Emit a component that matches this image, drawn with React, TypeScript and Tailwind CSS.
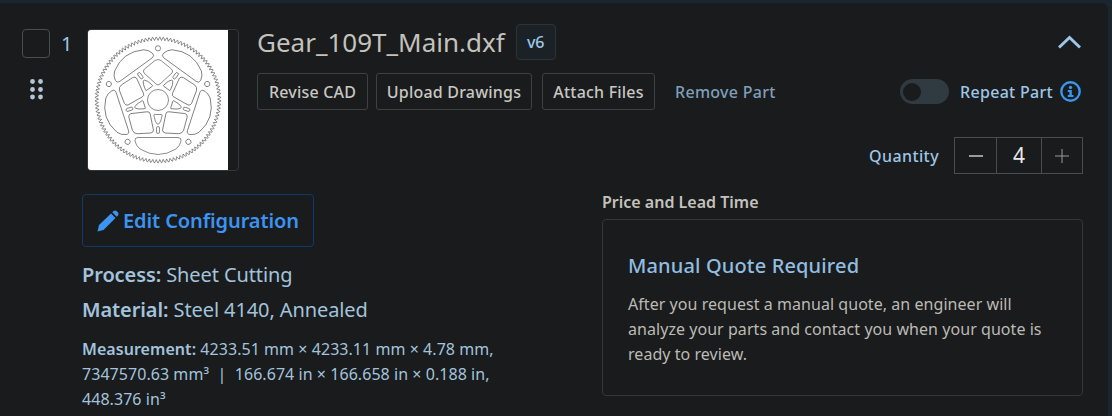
import React from "react";

function gearPath() {
  const n = 109;
  const pts: string[] = [];
  for (let i = 0; i < n; i++) {
    const t = (i / n) * Math.PI * 2;
    const d = (Math.PI * 2) / n;
    const p = (a: number, r: number) => `${(r * Math.sin(a)).toFixed(2)},${(-r * Math.cos(a)).toFixed(2)}`;
    pts.push((i === 0 ? "M" : "L") + p(t, 59.6));
    pts.push("L" + p(t + d * 0.42, 62.8));
    pts.push("L" + p(t + d * 0.58, 62.8));
  }
  return pts.join(" ") + " Z";
}

function Gear() {
  const rots = [0, 72, 144, 216, 288];
  return (
    <svg viewBox="-70 -70 140 140" width={140} height={140} className="block bg-white" fill="none" stroke="#3f3f3f" strokeWidth={0.6}>
      <path d={gearPath()} />
      <circle r={10.5} />
      {rots.map((r) => (
        <g key={r} transform={`rotate(${r})`}>
          <circle cx={0} cy={-51.7} r={2.6} />
          <path d="M-3,-39.5 Q0,-41.5 3,-39.5 L13.5,-31 Q15.5,-29 14,-27 L2,-16 Q0,-14 -2,-16 L-14,-27 Q-15.5,-29 -13.5,-31 Z" />
          <path d="M-20,37.5 H20 Q23.5,37.5 23,41 Q22,46 18,49 Q0,60 -18,49 Q-22,46 -23,41 Q-23.5,37.5 -20,37.5 Z" />
          <path d="M-3.5,14.5 H3.5 Q4.5,14.5 4,16 Q3,22 0.8,24 Q0,24.5 -0.8,24 Q-3,22 -4,16 Q-4.5,14.5 -3.5,14.5 Z" />
          <rect x={-1.5} y={26.5} width={3} height={7} rx={1.5} />
        </g>
      ))}
    </svg>
  );
}

function Grip() {
  const spots = [
    [2.5, 2.5], [10.5, 2.5],
    [2.5, 10.5], [10.5, 10.5],
    [2.5, 18], [10.5, 18],
  ];
  return (
    <svg width={13} height={21} viewBox="0 0 13 21" fill="#b4c6d4">
      {spots.map(([x, y], i) => (
        <circle key={i} cx={x} cy={y} r={2.4} />
      ))}
    </svg>
  );
}

function OutlineButton({ children, className }: { children: React.ReactNode; className: string }) {
  return (
    <button className={`h-[37px] rounded-[3px] border border-[#3e4144] text-[16px] font-medium tracking-[0.2px] text-[#c9c7c1] leading-none ${className}`}>
      {children}
    </button>
  );
}

export default function App() {
  return (
    <div className="w-[1112px] h-[416px] overflow-hidden bg-[#1a252d] font-['Noto_Sans',sans-serif] pt-[3px] pr-[4px]">
      <div className="h-full bg-[#191b1d] rounded-tr-[6px] flex flex-col">
        <div className="flex pl-[22px] pr-[25px]">
          <div className="w-[65px] shrink-0 pt-[26px]">
            <div className="flex items-start">
              <div className="w-[28px] h-[29px] rounded-[4px] border border-[#4a4d50]" />
              <span className="ml-[11px] text-[20px] leading-[29px] text-[#9ec6e6]">1</span>
            </div>
            <div className="mt-[21px] ml-[8px]">
              <Grip />
            </div>
          </div>
          <div className="w-[152px] h-[142px] shrink-0 mt-[26px] rounded-[4px] border border-[#33373a] overflow-hidden">
            <Gear />
          </div>
          <div className="ml-[18px] flex-1 pt-[21px]">
            <div className="flex items-center h-[36px]">
              <span className="text-[26px] leading-none text-[#c4c2bc]">Gear_109T_Main.dxf</span>
              <span className="ml-[11px] w-[40px] h-[36px] flex items-center justify-center rounded-[4px] border border-[#2e3337] bg-[#1a2228] text-[16px] font-medium text-[#9ec6e6]">
                v6
              </span>
              <svg className="ml-auto mr-[2px]" width={23} height={14} viewBox="0 0 23 14" fill="none" stroke="#9ec6e6" strokeWidth={3}>
                <path d="M1 12.5 L11.5 2.5 L22 12.5" />
              </svg>
            </div>
            <div className="flex items-center mt-[13px]">
              <OutlineButton className="w-[111px]">Revise CAD</OutlineButton>
              <OutlineButton className="w-[156px] ml-[8px]">Upload Drawings</OutlineButton>
              <OutlineButton className="w-[113px] ml-[10px]">Attach Files</OutlineButton>
              <span className="ml-[20px] text-[16px] font-medium tracking-[0.3px] text-[#7f9fb9]">Remove Part</span>
              <div className="ml-auto flex items-center">
                <div className="w-[49px] h-[25px] rounded-full bg-[#303b41] flex items-center pl-[3px]">
                  <div className="w-[18px] h-[18px] rounded-full bg-[#191b1d]" />
                </div>
                <span className="ml-[11px] text-[16px] font-medium tracking-[0.3px] text-[#9ec6e6]">Repeat Part</span>
                <svg className="ml-[7px] mr-[2px]" width={21} height={21} viewBox="0 0 21 21" fill="none">
                  <circle cx={10.5} cy={10.5} r={9.2} stroke="#3b96ee" strokeWidth={2.4} />
                  <circle cx={10.5} cy={6.4} r={1.7} fill="#3b96ee" />
                  <path d="M7.8 9 H11.8 V14 H13.4 V16 H7.8 V14 H9.4 V11 H7.8 Z" fill="#3b96ee" />
                </svg>
              </div>
            </div>
            <div className="flex items-center justify-end mt-[27px]">
              <span className="mr-[15px] text-[16px] font-medium tracking-[0.4px] text-[#9ec6e6]">Quantity</span>
              <div className="flex h-[37px] border border-[#4a4d50] text-[#e8e8e8]">
                <div className="w-[41px] flex items-center justify-center">
                  <svg width={14} height={2} viewBox="0 0 14 2"><rect width={14} height={2} fill="#9a9a98" /></svg>
                </div>
                <div className="w-[46px] flex items-center justify-center border-x border-[#4a4d50] text-[21px]">4</div>
                <div className="w-[40px] flex items-center justify-center">
                  <svg width={14} height={14} viewBox="0 0 14 14" fill="#9a9a98">
                    <rect y={6.5} width={14} height={1} />
                    <rect x={6.5} width={1} height={14} />
                  </svg>
                </div>
              </div>
            </div>
          </div>
        </div>
        <div className="flex pl-[82px] pr-[25px] mt-[20px]">
          <div className="w-[520px] shrink-0">
            <button className="w-[232px] h-[53px] rounded-[4px] border border-[#0e3a6e] flex items-center pl-[14px] gap-[4px] text-[20px] font-semibold text-[#3d93f0] tracking-[-0.1px]">
              <svg width={22} height={22} viewBox="0 0 22 22" fill="#3d93f0">
                <path d="M0.5 21.5 L2 15 L14 3.5 L18.5 8 L6.5 20 Z" />
                <path d="M15.3 2.3 L16.5 1.1 Q18 -0.1 19.6 1 L21 2.4 Q22 4 20.9 5.5 L19.7 6.7 Z" />
              </svg>
              <span>Edit Configuration</span>
            </button>
            <p className="mt-[14px] text-[20px] leading-[28px] text-[#a3c3dc] tracking-[-0.1px]">
              <span className="font-semibold">Process:</span> Sheet Cutting
            </p>
            <p className="mt-[7px] text-[20px] leading-[28px] text-[#a3c3dc] tracking-[-0.1px]">
              <span className="font-semibold">Material:</span> Steel 4140, Annealed
            </p>
            <p className="mt-[13px] w-[430px] text-[16px] leading-[25px] tracking-[0.05px] text-[#a3c3dc]">
              <span className="font-semibold">Measurement:</span> 4233.51 mm × 4233.11 mm × 4.78 mm, 7347570.63 mm³ &nbsp;|&nbsp; 166.674 in × 166.658 in × 0.188 in, 448.376 in³
            </p>
          </div>
          <div className="flex-1">
            <div className="text-[16px] font-semibold leading-[16px] text-[#c4c2bc]">Price and Lead Time</div>
            <div className="mt-[9px] h-[177px] rounded-[4px] border border-[#33363a] px-[25px] pt-[31px]">
              <h3 className="text-[20px] font-medium leading-[30px] tracking-[0.15px] text-[#92bde0]">Manual Quote Required</h3>
              <p className="mt-[11px] text-[16px] leading-[25px] tracking-[0.05px] text-[#bcbab4]">
                After you request a manual quote, an engineer will analyze your parts and contact you when your quote is ready to review.
              </p>
            </div>
          </div>
        </div>
      </div>
    </div>
  );
}
